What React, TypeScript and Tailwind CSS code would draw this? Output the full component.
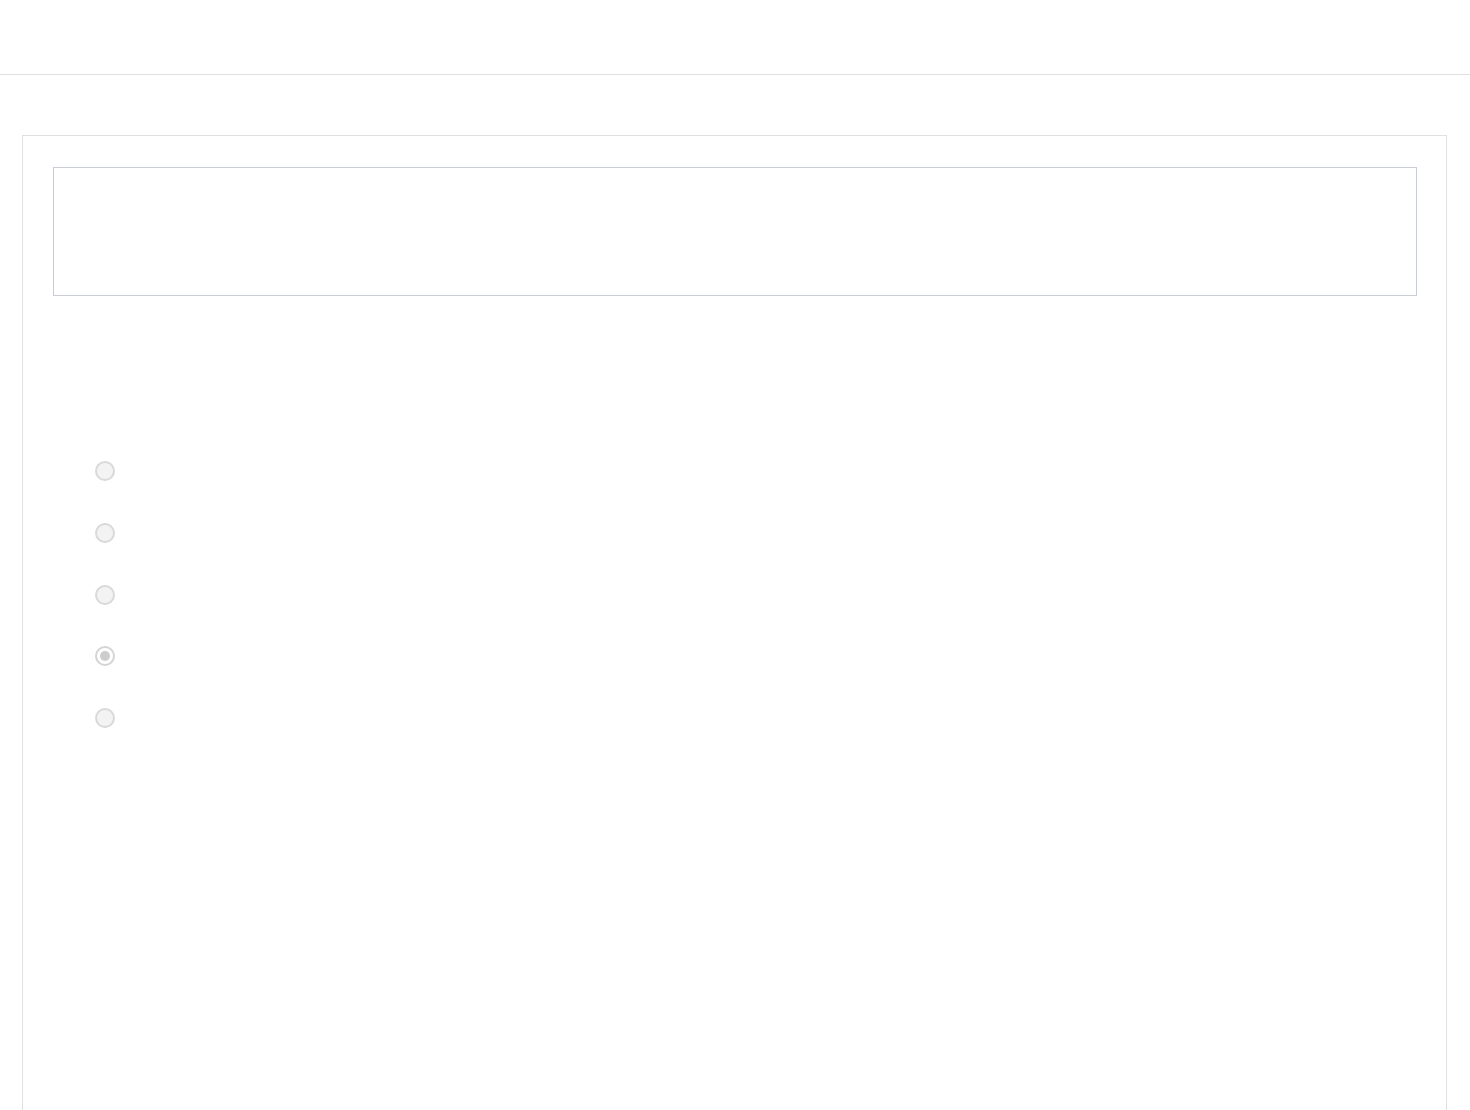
import React from "react";

const options = [false, false, false, true, false];

export default function App() {
  return (
    <div className="min-h-[1110px] bg-white font-['Liberation_Sans',sans-serif] overflow-hidden">
      <header className="h-[75px] border-b border-[#e3dfdf]" />
      <div className="pt-[60px]">
        <div className="ml-[22px] mr-[23px] min-h-[1000px] border border-[#e0e0e0] pl-[30px] pr-[29px] pt-[31px]">
          <div className="h-[129px] border border-[#c8cdd6]" />
          <div className="mt-[165px] ml-[42px] flex flex-col">
            {options.map((checked, i) => (
              <div key={i} className="flex h-[61.75px] items-start">
                <span
                  className={
                    checked
                      ? "flex h-[20px] w-[20px] items-center justify-center rounded-full border-2 border-[#d4d4d4] bg-white"
                      : "h-[20px] w-[20px] rounded-full border-2 border-[#d9d9d9] bg-[#f3f3f3]"
                  }
                >
                  {checked && <span className="h-[10px] w-[10px] rounded-full bg-[#cdcdcd]" />}
                </span>
              </div>
            ))}
          </div>
        </div>
      </div>
    </div>
  );
}
